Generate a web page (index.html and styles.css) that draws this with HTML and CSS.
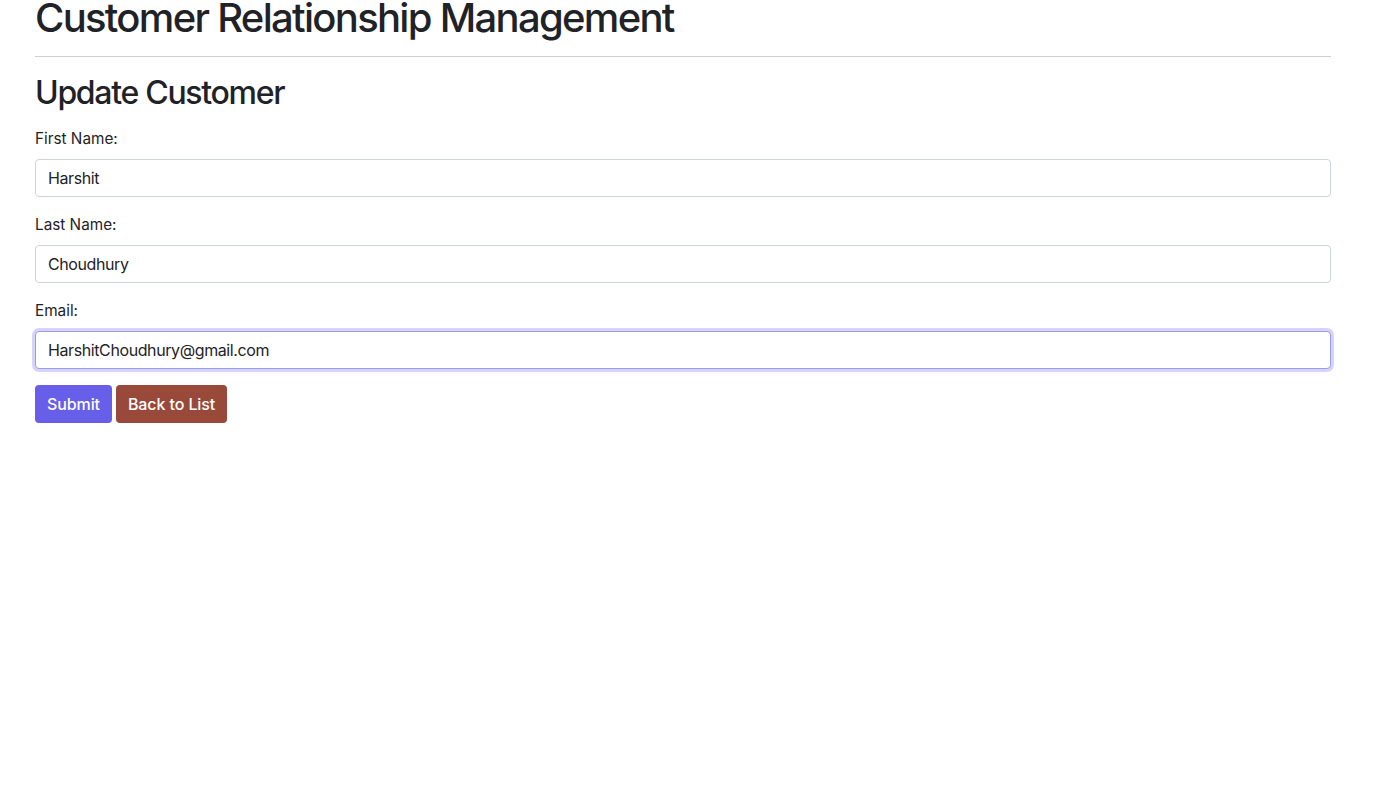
FILE: index.html
```html
<!DOCTYPE html>
<html lang="en">
<head>
<meta charset="utf-8">
<title>Customer Relationship Management</title>
<link rel="stylesheet" href="styles.css">
</head>
<body>
<div class="container">
  <h1 class="title">Customer Relationship Management</h1>
  <hr class="divider">
  <h2 class="subtitle">Update Customer</h2>
  <form class="form">
    <div class="field">
      <label class="label" for="fn">First Name:</label>
      <input class="input" id="fn" type="text" value="Harshit">
    </div>
    <div class="field">
      <label class="label" for="ln">Last Name:</label>
      <input class="input" id="ln" type="text" value="Choudhury">
    </div>
    <div class="field">
      <label class="label" for="em">Email:</label>
      <input class="input input-focus" id="em" type="text" value="HarshitChoudhury@gmail.com">
    </div>
    <div class="actions">
      <button type="button" class="btn btn-submit">Submit</button>
      <button type="button" class="btn btn-back">Back to List</button>
    </div>
  </form>
</div>
</body>
</html>
```

FILE: styles.css
```css
* { box-sizing: border-box; }
html, body { margin: 0; padding: 0; background: #fff; }
body {
  font-family: Inter, Roboto, "Liberation Sans", sans-serif;
  font-size: 16px;
  line-height: 1.5;
  color: #1f2226;
}
.container {
  padding: 0 56px 0 35px;
}
.title {
  font-size: 40px;
  font-weight: 500;
  line-height: 36px;
  margin: 0;
  letter-spacing: -1.7px;
  white-space: nowrap;
}
.divider {
  border: 0;
  border-top: 1px solid #cfcfcf;
  margin: 20px 0 0 0;
}
.subtitle {
  font-size: 32px;
  font-weight: 500;
  line-height: 1.2;
  margin: 17px 0 15px 0;
  letter-spacing: -1.3px;
}
.field { margin-bottom: 16px; }
.label {
  display: block;
  margin-bottom: 8px;
  font-size: 15.3px;
  line-height: 24px;
}
.input {
  display: block;
  width: 100%;
  height: 38px;
  padding: 6px 12px;
  font-family: inherit;
  font-size: 16px;
  letter-spacing: -0.4px;
  color: #1f2226;
  background: #fff;
  border: 1px solid #ced4da;
  border-radius: 4px;
  outline: none;
}
.input-focus {
  border-color: #9a9cf0;
  box-shadow: 0 0 0 3px #d6d4fa;
}
.actions { display: flex; gap: 4px; }
.btn {
  height: 38px;
  padding: 6px 12px;
  font-family: inherit;
  font-size: 16px;
  font-weight: 500;
  letter-spacing: -0.1px;
  color: #fff;
  border: 0;
  border-radius: 4px;
  cursor: pointer;
}
.btn-submit { background: #675ee9; }
.btn-back { background: #99493a; }
```
